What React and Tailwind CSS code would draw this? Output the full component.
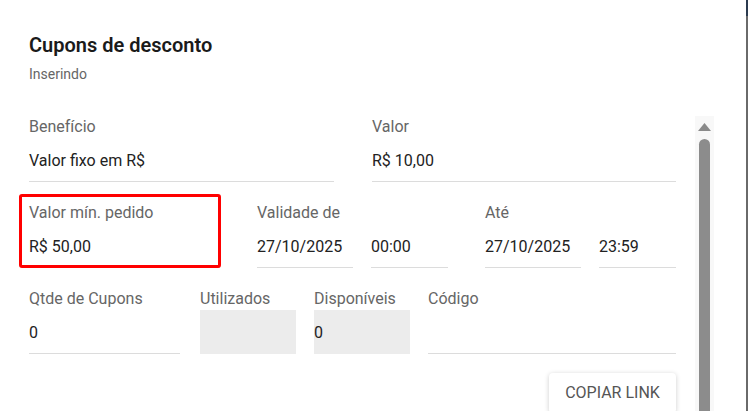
import React from 'react';

const Field = ({ label, value, width, disabled = false, children }) => (
  <div className={`relative shrink-0 ${width}`}>
    <div className="text-[16px] leading-[19px] h-[19px] text-[#666] whitespace-nowrap">{label}</div>
    <div
      className={`mt-[2px] h-[44px] pt-[13px] text-[16px] leading-[19px] text-[#222] border-b whitespace-nowrap ${
        disabled ? 'bg-[#ececec] border-[#ececec] pl-0' : 'border-[#dcdcdc]'
      }`}
    >
      {value}
    </div>
    {children}
  </div>
);

const DateTime = ({ label, date, time }) => (
  <div className="w-[191px] shrink-0">
    <div className="text-[16px] leading-[19px] h-[19px] text-[#666]">{label}</div>
    <div className="mt-[2px] flex gap-[18px]">
      <div className="w-[96px] h-[44px] pt-[13px] text-[16px] leading-[19px] text-[#222] border-b border-[#dcdcdc]">{date}</div>
      <div className="w-[77px] h-[44px] pt-[13px] text-[16px] leading-[19px] text-[#222] border-b border-[#dcdcdc]">{time}</div>
    </div>
  </div>
);

const App = () => {
  return (
    <div className="w-[748px] h-[411px] flex overflow-hidden bg-white font-['Roboto',sans-serif]">
      <div className="flex-1 pl-[29px] pt-[31px]">
        <h1 className="text-[20px] leading-[28px] font-semibold text-[#1a1a1a]">Cupons de desconto</h1>
        <p className="mt-[7px] text-[14px] leading-[16px] text-[#666]">Inserindo</p>

        <div className="flex mt-[34px]">
          <div className="w-[647px] pt-[1px] flex flex-col gap-[21px]">
            <div className="flex gap-[38px]">
              <Field label="Benefício" value="Valor fixo em R$" width="w-[305px]" />
              <Field label="Valor" value="R$ 10,00" width="w-[304px]" />
            </div>

            <div className="flex gap-[37px]">
              <Field label="Valor mín. pedido" value="R$ 50,00" width="w-[191px]">
                <div className="absolute left-[-10px] top-[-9px] w-[202px] h-[74px] border-[3px] border-[#ff0000] rounded-[3px]" />
              </Field>
              <DateTime label="Validade de" date="27/10/2025" time="00:00" />
              <DateTime label="Até" date="27/10/2025" time="23:59" />
            </div>

            <div className="flex">
              <Field label="Qtde de Cupons" value="0" width="w-[151px]" />
              <div className="ml-[20px]">
                <Field label="Utilizados" value="" width="w-[96px]" disabled />
              </div>
              <div className="ml-[18px]">
                <Field label="Disponíveis" value="0" width="w-[96px]" disabled />
              </div>
              <div className="ml-[18px]">
                <Field label="Código" value="" width="w-[248px]" />
              </div>
            </div>

            <div className="flex justify-end -mt-[2px]">
              <button className="w-[127px] h-[40px] bg-white rounded-[4px] shadow-[0_1px_5px_rgba(0,0,0,0.2)] text-[16px] text-[#555] uppercase">
                Copiar link
              </button>
            </div>
          </div>

          <div className="ml-[19px] w-[19px] bg-[#f8f8f8] flex flex-col items-center pt-[7px]">
            <svg width="13" height="8" viewBox="0 0 13 8">
              <path d="M6.5 0 L13 8 L0 8 Z" fill="#8a8a8a" />
            </svg>
            <div className="mt-[8px] w-[11px] h-[300px] bg-[#8c8c8c] rounded-t-[6px]" />
          </div>
        </div>
      </div>
      <div className="w-[2px] flex flex-col">
        <div className="h-[16px] bg-[#2b3a4f]" />
        <div className="flex-1 bg-[#6a6a6a]" />
      </div>
    </div>
  );
};

export default App;
